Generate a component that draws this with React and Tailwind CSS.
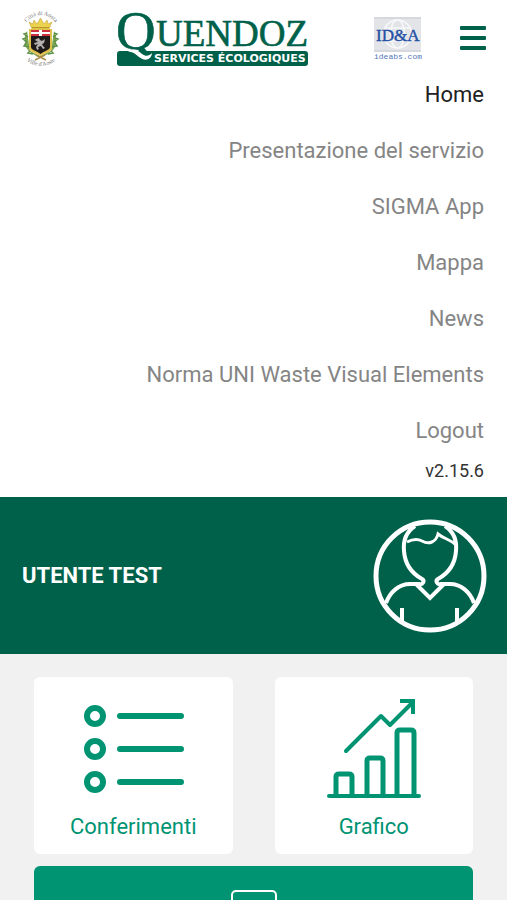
import React, { useState } from 'react';

const menuItems = [
  'Home',
  'Presentazione del servizio',
  'SIGMA App',
  'Mappa',
  'News',
  'Norma UNI Waste Visual Elements',
  'Logout',
];

const CrestLogo = () => (
  <svg className="w-[38px] h-[56px] shrink-0 overflow-visible" viewBox="0 0 38 56" role="img" aria-label="Città di Aosta">
    <defs>
      <path id="crest-top" d="M2 22 A16 16 0 0 1 36 22" />
      <path id="crest-bottom" d="M0 40 A19 16 0 0 0 38 40" />
    </defs>
    <text fontSize="6" fill="#777" fontFamily="Liberation Serif, serif" textAnchor="middle">
      <textPath href="#crest-top" startOffset="50%">Città di Aosta</textPath>
    </text>
    <text fontSize="6" fill="#777" fontFamily="Liberation Serif, serif" textAnchor="middle">
      <textPath href="#crest-bottom" startOffset="50%">Ville d'Aoste</textPath>
    </text>
    {/* branches */}
    <path d="M5 21C1 28 2 38 9 43L18 48L28 43C35 38 36 28 32 21L29 41L18 46L8 41Z" fill="#7fa653" />
    <path d="M5 23l-3 1 4 3M4 28l-3 1 4 3M4 33l-2 3 5 1M32 23l3 1-4 3M33 28l3 1-4 3M33 33l2 3-5 1M8 41l-2 2 5 1M29 41l2 2-5 1" stroke="#5c9048" strokeWidth="1.500" fill="none" />
    <path d="M13 50L23 45M24 50L14 45" stroke="#a98c48" strokeWidth="1.500" />
    {/* crown */}
    <path d="M10 19L7 12L11 14L12 10L15 14L18.500 8L22 14L25 10L26 14L30 12L27 19Z" fill="#ecd34e" stroke="#c4a23a" strokeWidth="0.600" />
    <path d="M10 17.500H27" stroke="#b8962c" strokeWidth="1" />
    {/* shield */}
    <path d="M7 19H30V38C30 42 23 43 18.500 46C14 43 7 42 7 38Z" fill="#dfc04a" />
    <path d="M9 25H28V37C28 40 22 41 18.500 44C15 41 9 40 9 37Z" fill="#1f1a1a" />
    <path d="M9 20H28V26H9Z" fill="#cf3040" />
    <path d="M17 20H20V26H17ZM9 22H28V24H9Z" fill="#fff" />
    <path d="M14 29l3-1 1 2 2 1 3-2-1 4-2 1 1 2 2 2-2 1-2-3-3 1 1 2-2 1-1-3 2-3-3 1-1-2 4-1-3-2z" fill="#b5b0ae" />
  </svg>
);

const QuendozLogo = () => (
  <svg className="w-[192px] h-[56px] shrink-0 overflow-visible" viewBox="0 0 192 56" role="img" aria-label="Quendoz Services Écologiques">
    <g fill="#00614a" stroke="#00614a" strokeWidth="0.600" fontFamily="Liberation Serif, serif">
      <text x="-1" y="39" fontSize="55">Q</text>
      <text x="39" y="36" fontSize="37">UENDOZ</text>
    </g>
    <rect x="0" y="41" width="191" height="15" rx="3" fill="#00614a" />
    <path d="M11 42C15 37 21 40 25 44C29 47 32 46 35 43C34 51 27 51 22 47C18 44 15 41 11 42Z" fill="#fff" />
    <text x="37" y="52" fontSize="11" fontWeight="700" fill="#fff" fontFamily="DejaVu Sans, sans-serif">SERVICES ÉCOLOGIQUES</text>
  </svg>
);

const IdeaLogo = () => (
  <svg className="w-[48px] h-[44px] shrink-0" viewBox="0 0 48 44" role="img" aria-label="ID&A ideabs.com">
    <rect y="1" width="47" height="35" fill="#e3e4e8" />
    <path d="M0 2H47M0 35H47" stroke="#c9ccd3" strokeWidth="1" />
    <g fill="none" stroke="#f8f8fa" strokeWidth="1.500">
      <circle cx="23.500" cy="18" r="14" />
      <ellipse cx="23.500" cy="18" rx="7" ry="14" />
      <path d="M11 12H36M11 25H36" />
    </g>
    <text x="2" y="25" fontSize="17" fill="#2450a4" stroke="#2450a4" strokeWidth="0.400" fontFamily="Liberation Serif, serif">ID&amp;A</text>
    <text x="0" y="43" fontSize="8" fill="#5577bb" fontFamily="Liberation Mono, monospace">ideabs.com</text>
  </svg>
);

const UserAvatar = () => (
  <svg className="w-[114px] h-[114px] shrink-0" viewBox="0 0 114 114" fill="none" stroke="#fff" strokeWidth="4" aria-hidden="true">
    <circle cx="57" cy="57" r="54" strokeWidth="5" />
    <path d="M42 7C33 13 30 22 31 32C32 46 40 55 49 60C52 62 50 66 46 65H37C26 65 17 73 13 84" />
    <path d="M72 7C81 13 84 22 83 32C82 46 74 55 65 60C62 62 64 66 68 65H77C88 65 97 73 101 84" />
    <path d="M43 65L57 79L71 65" />
    <path d="M34 23C40 20 45 20 49 22C56 26 63 23 65 15C71 20 77 20 83 26" strokeWidth="3" />
    <path d="M29 89V102M84 89V102" />
  </svg>
);

const ListIcon = () => (
  <svg className="w-[102px] h-[92px]" viewBox="0 0 102 92" fill="none" stroke="#009473" strokeWidth="6" strokeLinecap="round" aria-hidden="true">
    <circle cx="13" cy="13" r="8" />
    <circle cx="13" cy="46" r="8" />
    <circle cx="13" cy="79" r="8" />
    <path d="M38 13H99M38 46H99M38 79H99" />
  </svg>
);

const ChartIcon = () => (
  <svg className="w-[96px] h-[102px]" viewBox="0 0 96 102" fill="none" stroke="#009473" strokeWidth="5" strokeLinecap="round" aria-hidden="true">
    <path d="M3 98H93" strokeWidth="4" />
    <path d="M10 97V79Q10 76 13 76H23Q26 76 26 79V97" />
    <path d="M41 97V63Q41 60 44 60H54Q57 60 57 63V97" />
    <path d="M71 97V35Q71 32 74 32H85Q88 32 88 35V97" />
    <path d="M20 53L55 18L64 27L86 5" strokeWidth="4" strokeLinejoin="round" />
    <path d="M76 3H87V14" strokeWidth="4" strokeLinecap="square" />
  </svg>
);

const App = () => {
  const [menuOpen, setMenuOpen] = useState(true);
  const [active, setActive] = useState('Home');

  return (
    <div className="h-screen overflow-y-auto [scrollbar-width:none] bg-[#f1f1f1] font-[Roboto,sans-serif]">
      <header className="bg-white">
        <div className="flex items-center pt-[10px] pl-[22px] pr-[21px]">
          <CrestLogo />
          <div className="ml-[57px]">
            <QuendozLogo />
          </div>
          <div className="ml-auto flex items-center gap-[38px]">
            <IdeaLogo />
            <button type="button" aria-label="Menu" aria-expanded={menuOpen} onClick={() => setMenuOpen(!menuOpen)} className="flex flex-col gap-[6px]">
              <span className="block w-[26px] h-1 rounded-[1px] bg-[#00614a]" />
              <span className="block w-[26px] h-1 rounded-[1px] bg-[#00614a]" />
              <span className="block w-[26px] h-1 rounded-[1px] bg-[#00614a]" />
            </button>
          </div>
        </div>
        {menuOpen && (
          <nav className="flex flex-col items-end pr-[23px] pb-[13px]">
            {menuItems.map((item) => (
              <a
                key={item}
                href="#"
                onClick={() => setActive(item)}
                className={`flex items-center h-14 text-[22px] ${active === item ? 'text-[#212121]' : 'text-[#858585]'}`}
              >
                {item}
              </a>
            ))}
            <span className="text-lg leading-[26px] text-[#333]">v2.15.6</span>
          </nav>
        )}
      </header>

      <section className="flex items-center justify-between bg-[#00614a] pl-[22px] pr-5 h-[157px]">
        <h1 className="text-[22px] font-bold text-white">UTENTE TEST</h1>
        <UserAvatar />
      </section>

      <main className="px-[34px] pt-[23px] pb-6">
        <div className="grid grid-cols-2 gap-[42px]">
          <button type="button" className="flex flex-col items-center justify-between h-[177px] rounded-md bg-white pt-[26px] pb-[11px] text-[22px] leading-8 text-[#009473]">
            <ListIcon />
            Conferimenti
          </button>
          <button type="button" className="flex flex-col items-center justify-between h-[177px] rounded-md bg-white pt-[21px] pb-[11px] text-[22px] leading-8 text-[#009473]">
            <ChartIcon />
            Grafico
          </button>
        </div>
        <button type="button" aria-label="Calendario" className="mt-3 flex w-full justify-center rounded-md bg-[#009473] pt-6 pb-12">
          <svg className="w-[46px] h-[80px]" viewBox="0 0 46 80" fill="none" stroke="#fff" strokeWidth="2" aria-hidden="true">
            <rect x="1" y="1" width="44" height="78" rx="4" />
          </svg>
        </button>
      </main>
    </div>
  );
};

export default App;
